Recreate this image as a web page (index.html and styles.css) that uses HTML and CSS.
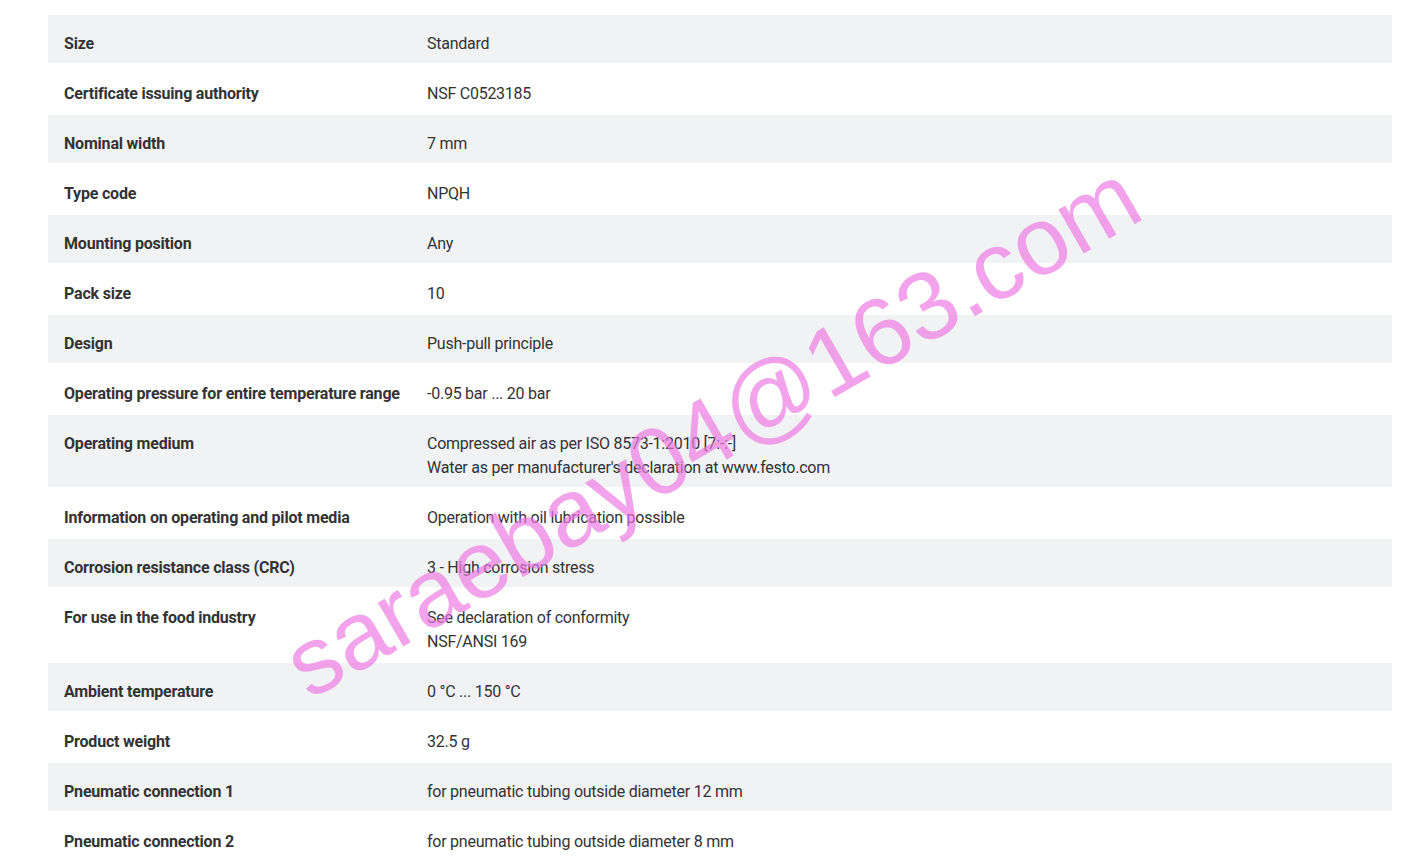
FILE: index.html
```html
<!DOCTYPE html>
<html lang="en">
<head>
<meta charset="utf-8">
<title>Technical data</title>
<link rel="stylesheet" href="styles.css">
</head>
<body>
<div class="page">
  <div class="specs">
    <div class="row alt"><div class="label">Size</div><div class="value">Standard</div></div>
    <div class="row"><div class="label">Certificate issuing authority</div><div class="value">NSF C0523185</div></div>
    <div class="row alt"><div class="label">Nominal width</div><div class="value">7 mm</div></div>
    <div class="row"><div class="label">Type code</div><div class="value">NPQH</div></div>
    <div class="row alt"><div class="label">Mounting position</div><div class="value">Any</div></div>
    <div class="row"><div class="label">Pack size</div><div class="value">10</div></div>
    <div class="row alt"><div class="label">Design</div><div class="value">Push-pull principle</div></div>
    <div class="row"><div class="label">Operating pressure for entire temperature range</div><div class="value">-0.95 bar ... 20 bar</div></div>
    <div class="row alt"><div class="label">Operating medium</div><div class="value">Compressed air as per ISO 8573-1:2010 [7:-:-]<br>Water as per manufacturer's declaration at www.festo.com</div></div>
    <div class="row"><div class="label">Information on operating and pilot media</div><div class="value">Operation with oil lubrication possible</div></div>
    <div class="row alt"><div class="label">Corrosion resistance class (CRC)</div><div class="value">3 - High corrosion stress</div></div>
    <div class="row"><div class="label">For use in the food industry</div><div class="value">See declaration of conformity<br>NSF/ANSI 169</div></div>
    <div class="row alt"><div class="label">Ambient temperature</div><div class="value">0 °C ... 150 °C</div></div>
    <div class="row"><div class="label">Product weight</div><div class="value">32.5 g</div></div>
    <div class="row alt"><div class="label">Pneumatic connection 1</div><div class="value">for pneumatic tubing outside diameter 12 mm</div></div>
    <div class="row"><div class="label">Pneumatic connection 2</div><div class="value">for pneumatic tubing outside diameter 8 mm</div></div>
  </div>
  <div class="watermark">saraebay04@163.com</div>
</div>
</body>
</html>
```

FILE: styles.css
```css
html, body {
  margin: 0;
  padding: 0;
  background: #ffffff;
}

.page {
  position: relative;
  padding: 14px 33px 0 48px;
  font-family: Roboto, "Liberation Sans", sans-serif;
  font-size: 16px;
  color: #333333;
  overflow: hidden;
  height: 862px;
  box-sizing: border-box;
}

.specs {
  display: flex;
  flex-direction: column;
}

.row {
  display: grid;
  grid-template-columns: 363px 1fr;
  padding: 17px 16px 7px;
  line-height: 24px;
  border-top: 1px solid #ffffff;
  border-bottom: 1px solid #ffffff;
}

.row.alt {
  background: #f1f2f4;
}

.label {
  font-weight: 700;
  letter-spacing: -0.2px;
}

.value {
  font-weight: 400;
  letter-spacing: -0.25px;
}

.watermark {
  position: absolute;
  left: 712px;
  top: 430px;
  transform: translate(-50%, -50%) rotate(-30deg);
  font-family: "Liberation Sans", Arial, sans-serif;
  font-size: 96px;
  line-height: 1;
  color: rgba(236, 120, 226, 0.68);
  white-space: nowrap;
  pointer-events: none;
}
```
